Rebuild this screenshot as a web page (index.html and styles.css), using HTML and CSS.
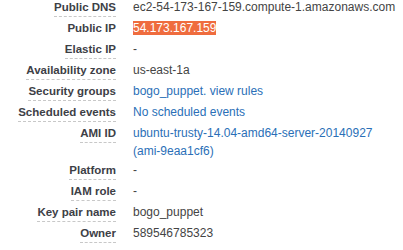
FILE: index.html
```
<!DOCTYPE html>
<html>
<head>
<meta charset="utf-8">
<link rel="stylesheet" href="styles.css">
</head>
<body>
<div class="details">
  <div class="row"><div class="label"><span class="dash">Public DNS</span></div><div class="value">ec2-54-173-167-159.compute-1.amazonaws.com</div></div>
  <div class="row"><div class="label"><span>Public IP</span></div><div class="value"><span class="hl">54.173.167.159</span></div></div>
  <div class="row"><div class="label"><span class="dash">Elastic IP</span></div><div class="value">-</div></div>
  <div class="row"><div class="label"><span class="dash">Availability zone</span></div><div class="value">us-east-1a</div></div>
  <div class="row"><div class="label"><span class="dash">Security groups</span></div><div class="value"><a class="link">bogo_puppet</a><span class="link">. </span><a class="link">view rules</a></div></div>
  <div class="row"><div class="label"><span class="dash">Scheduled events</span></div><div class="value"><span class="link">No scheduled events</span></div></div>
  <div class="row tall"><div class="label"><span class="dash">AMI ID</span></div><div class="value"><a class="link">ubuntu-trusty-14.04-amd64-server-20140927</a><div class="second"><a class="link">(ami-9eaa1cf6)</a></div></div></div>
  <div class="row"><div class="label"><span class="dash">Platform</span></div><div class="value">-</div></div>
  <div class="row"><div class="label"><span class="dash">IAM role</span></div><div class="value">-</div></div>
  <div class="row"><div class="label"><span class="dash">Key pair name</span></div><div class="value">bogo_puppet</div></div>
  <div class="row"><div class="label"><span class="dash">Owner</span></div><div class="value">589546785323</div></div>
</div>
</body>
</html>
```
FILE: styles.css
```
html, body {
  margin: 0;
  padding: 0;
  background: #ffffff;
}
body {
  font-family: "Liberation Sans", Arial, sans-serif;
  font-size: 12px;
  color: #444444;
  overflow: hidden;
}
.details {
  margin-top: -3px;
}
.row {
  display: grid;
  grid-template-columns: 116px 1fr;
  column-gap: 17px;
  padding: 2px 0;
  line-height: 17px;
}
.row.tall {
  padding-bottom: 0;
}
.label {
  text-align: right;
  font-weight: bold;
  font-size: 11.5px;
  color: #3d4046;
}
.dash {
  padding-bottom: 3px;
  border-bottom: 1px dashed #c8c8c8;
}
.value {
  color: #444444;
  white-space: nowrap;
}
.second {
  line-height: 18px;
}
.link {
  color: #2a6fb7;
  text-decoration: none;
}
.hl {
  background: #ef6c3e;
  color: #ffffff;
}
```
